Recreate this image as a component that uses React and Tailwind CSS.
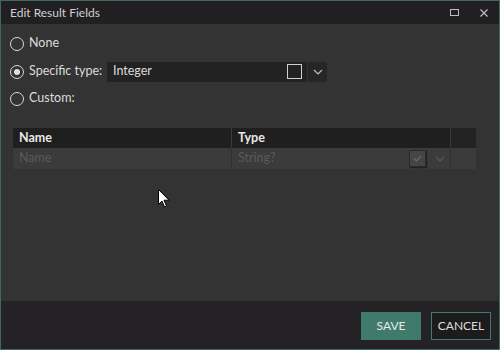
import React from "react";

const Radio = ({ checked, label }) => (
  <label className="flex items-center gap-[5px] text-[12.5px] text-[#dcdcdc]">
    <span className="w-[14px] h-[14px] rounded-full border-[1.5px] border-[#d8d8d8] flex items-center justify-center">
      {checked && <span className="w-[6px] h-[6px] rounded-full bg-[#e0e0e0]" />}
    </span>
    <span>{label}</span>
  </label>
);

const Chevron = ({ className }) => (
  <svg width="10" height="6" viewBox="0 0 10 6" className={className}>
    <path d="M1 1 L5 5 L9 1" fill="none" stroke="currentColor" strokeWidth="1.2" />
  </svg>
);

export default function App() {
  return (
    <div
      className="w-[500px] h-[350px] flex flex-col border border-[#3b6a60] bg-[#333333] overflow-hidden"
      style={{ fontFamily: "Lato, 'Noto Sans', sans-serif" }}
    >
      {/* title bar */}
      <div className="h-[23px] shrink-0 flex items-center bg-[#221f22] pl-[9px]">
        <span className="text-[12px] text-[#cfcfcf] flex-1">Edit Result Fields</span>
        <div className="flex items-center h-full">
          <span className="w-[30px] flex justify-center">
            <span className="w-[9px] h-[7px] border border-[#bdbdbd]" />
          </span>
          <span className="w-[30px] flex justify-center text-[#bdbdbd]">
            <svg width="8" height="8" viewBox="0 0 8 8">
              <path d="M0.5 0.5 L7.5 7.5 M7.5 0.5 L0.5 7.5" stroke="currentColor" strokeWidth="1.2" />
            </svg>
          </span>
        </div>
      </div>

      {/* content */}
      <div className="flex-1 flex flex-col pl-[9px] pr-[24px] pt-[9px]">
        <div className="h-[21px] flex items-center">
          <Radio label="None" />
        </div>
        <div className="h-[21px] mt-[7px] flex items-center">
          <div className="w-[97px]">
            <Radio checked label="Specific type:" />
          </div>
          <div className="w-[200px] h-[20px] bg-[#222222] flex items-center pl-[6px] pr-[5px]">
            <span className="flex-1 text-[12.5px] text-[#dcdcdc]">Integer</span>
            <span className="w-[15px] h-[15px] border-[1.5px] border-[#d0d0d0]" />
          </div>
          <div className="ml-[1px] w-[19px] h-[20px] bg-[#262626] flex items-center justify-center text-[#bdbdbd]">
            <Chevron />
          </div>
        </div>
        <div className="h-[21px] mt-[6px] flex items-center">
          <Radio label="Custom:" />
        </div>

        {/* table */}
        <div className="mt-[19px] ml-[3px] w-[463px] flex flex-col">
          <div className="h-[20px] flex bg-[#1f1f1f] text-[12.5px] font-bold text-[#e8e8e8]">
            <div className="w-[219px] pl-[6px] flex items-center border-r border-[#3a3a3a]">Name</div>
            <div className="w-[219px] pl-[6px] flex items-center border-r border-[#3a3a3a]">Type</div>
            <div className="flex-1 bg-[#232323]" />
          </div>
          <div className="h-[21px] flex bg-[#3b3b3b] text-[12.5px] text-[#5a5a5a]">
            <div className="w-[219px] pl-[6px] flex items-center border-r border-[#303030]">Name</div>
            <div className="w-[219px] pl-[6px] flex items-center border-r border-[#303030]">
              <span className="flex-1">String?</span>
              <span className="w-[17px] h-[17px] bg-[#454545] border border-[#2a2a2a] shadow-[1px_1px_1px_#222] flex items-center justify-center text-[#6a6a6a]">
                <svg width="9" height="7" viewBox="0 0 9 7">
                  <path d="M1 3.5 L3.5 6 L8 1" fill="none" stroke="currentColor" strokeWidth="1.2" />
                </svg>
              </span>
              <span className="w-[21px] flex justify-center text-[#5a5a5a] ml-[3px]">
                <Chevron />
              </span>
            </div>
            <div className="flex-1" />
          </div>
        </div>

        <div className="ml-[148px] mt-[20px] w-[14px]">
          <svg width="12" height="19" viewBox="0 0 12 19">
            <path d="M0.5 0.5 L0.5 15.5 L4 12 L6.5 18 L8.5 17 L6 11.2 L11 11.2 Z" fill="#ffffff" stroke="#000000" strokeWidth="1" />
          </svg>
        </div>
      </div>

      {/* footer */}
      <div className="h-[48px] shrink-0 bg-[#242224] flex items-center justify-end gap-[10px] pr-[8px] pt-[2px]">
        <button className="w-[60px] h-[28px] bg-[#3f7a6d] text-[12px] text-[#eaeaea]">SAVE</button>
        <button className="w-[60px] h-[28px] border border-[#3f7a6d] bg-[#1c1c1c] text-[12px] text-[#dcdcdc]">CANCEL</button>
      </div>
    </div>
  );
}
